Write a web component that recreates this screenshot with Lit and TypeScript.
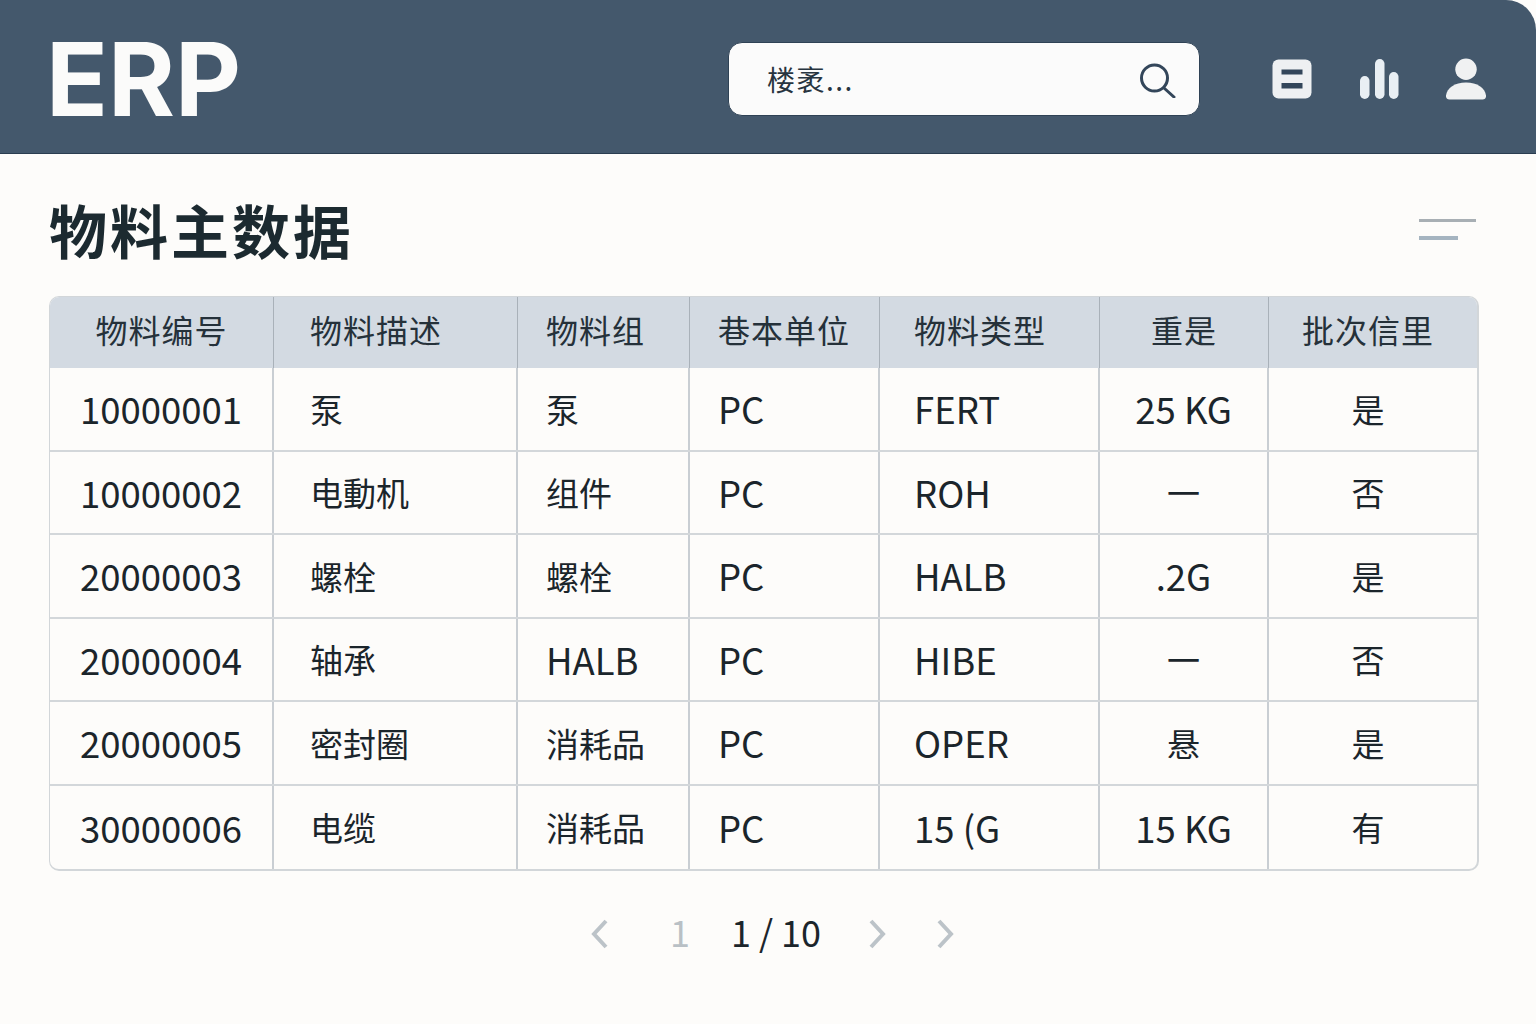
import { LitElement, html, css } from 'lit';
import { customElement } from 'lit/decorators.js';

const HEADERS = ['物料编号', '物料描述', '物料组', '巷本单位', '物料类型', '重是', '批次信里'];

const ROWS = [
  ['10000001', '泵', '泵', 'PC', 'FERT', '25 KG', '是'],
  ['10000002', '电動机', '组件', 'PC', 'ROH', '一', '否'],
  ['20000003', '螺栓', '螺栓', 'PC', 'HALB', '.2G', '是'],
  ['20000004', '轴承', 'HALB', 'PC', 'HIBE', '一', '否'],
  ['20000005', '密封圈', '消耗品', 'PC', 'OPER', '悬', '是'],
  ['30000006', '电缆', '消耗品', 'PC', '15 (G', '15 KG', '有'],
];

const hasCjk = (s: string) => /[\u4e00-\u9fff]/.test(s);

@customElement('app-root')
export class AppRoot extends LitElement {
  static styles = css`
    :host {
      display: block;
      width: 1536px;
      height: 1024px;
      overflow: hidden;
      background: #fdfcfa;
      font-family: 'Noto Sans CJK SC', 'Noto Sans', sans-serif;
      color: #1b252b;
    }

    .header {
      display: grid;
      grid-template-columns: 680px 472px 1fr;
      align-items: center;
      box-sizing: border-box;
      height: 154px;
      padding: 5px 0 0 48px;
      background: #44586c;
      border-bottom: 1px solid #2a3d50;
      border-top-right-radius: 30px;
    }

    .logo {
      margin-left: -2px;
      font-family: Inter, sans-serif;
      font-size: 102px;
      font-weight: 700;
      line-height: 1;
      color: #fbfbfa;
    }

    .search {
      display: flex;
      align-items: center;
      justify-content: space-between;
      box-sizing: border-box;
      height: 74px;
      padding: 0 23px 0 38px;
      background: #fbfbfb;
      border: 1px solid #2f4255;
      border-radius: 14px;
      font-size: 28px;
      letter-spacing: 1.5px;
      color: #27343f;
    }

    .header-icons {
      display: flex;
      align-items: center;
      gap: 47px;
      padding-left: 72px;
    }

    .header-icons svg {
      display: block;
    }

    .main {
      padding: 0 57px 0 49px;
    }

    .title-row {
      display: flex;
      align-items: center;
      justify-content: space-between;
      padding: 42px 3px 34px 0;
    }

    h1 {
      margin: 0;
      font-size: 58px;
      line-height: 66px;
      font-weight: 700;
      letter-spacing: 3px;
      color: #1c2a30;
    }

    .menu-lines {
      display: flex;
      flex-direction: column;
      gap: 14px;
    }

    .menu-lines span {
      display: block;
      width: 57px;
      height: 3px;
      background: #a8afb4;
    }

    .menu-lines span:last-child {
      width: 39px;
      height: 4px;
      background: #a5b4c0;
    }

    .table {
      display: grid;
      grid-template-rows: 71px repeat(6, 1fr);
      box-sizing: border-box;
      height: 575px;
      border: 1px solid #d2d6d9;
      border-bottom-width: 2px;
      border-right-width: 2px;
      border-radius: 10px;
      overflow: hidden;
    }

    .row {
      display: grid;
      grid-template-columns: 224px 244px 172px 190px 220px 169px 1fr;
      border-bottom: 2px solid #d3d7da;
    }

    .row:last-child {
      border-bottom: none;
    }

    .row.head {
      background: #d3dae2;
      border-bottom: none;
    }

    .cell {
      display: flex;
      align-items: center;
      box-sizing: border-box;
      border-right: 2px solid #c9ced3;
      font-size: 36.500px;
      white-space: nowrap;
    }

    .cell:last-child {
      border-right: none;
      padding-right: 10px;
    }

    .cell.cjk {
      font-size: 33px;
    }

    .head .cell {
      border-right: 1px solid #a9b1b9;
      padding-bottom: 7px;
      font-size: 32px;
      letter-spacing: 1px;
      color: #25313a;
    }

    .head .cell:last-child {
      border-right: none;
    }

    .cell:nth-child(1),
    .cell:nth-child(6),
    .cell:nth-child(7) {
      justify-content: center;
    }

    .cell:nth-child(2) {
      padding-left: 36px;
    }

    .cell:nth-child(3),
    .cell:nth-child(4) {
      padding-left: 28px;
    }

    .cell:nth-child(5) {
      padding-left: 34px;
    }

    .pager {
      display: flex;
      align-items: center;
      justify-content: center;
      height: 50px;
      margin-top: 38px;
      padding-left: 17px;
      font-size: 36px;
      line-height: 50px;
    }

    .pager svg {
      display: block;
    }

    .pager span {
      margin-bottom: 6px;
    }

    .pager .first {
      margin-left: 61px;
      margin-right: 41px;
      color: #b9c0c5;
    }

    .pager .current {
      margin-right: 47px;
    }

    .pager .last {
      margin-left: 50px;
    }
  `;

  render() {
    return html`
      <div class="header">
        <div class="logo">ERP</div>
        <div class="search">
          <span>楼袤...</span>
          <svg width="38" height="38" viewBox="0 0 38 38" fill="none" stroke="#33465a" stroke-width="3">
            <circle cx="16.5" cy="18" r="13"></circle>
            <path d="M26 28l10 9" stroke-linecap="round"></path>
          </svg>
        </div>
        <div class="header-icons">
          <svg width="40" height="40" viewBox="0 0 40 40">
            <rect x="0.5" y="0.5" width="39" height="39" rx="6" fill="#eef0f2"></rect>
            <rect x="9.500" y="10.500" width="21" height="5" fill="#33465a"></rect>
            <rect x="9.500" y="24" width="21" height="5.500" fill="#33465a"></rect>
          </svg>
          <svg width="40" height="40" viewBox="0 0 40 40" fill="#e9eff4">
            <rect x="1" y="17" width="9.500" height="23" rx="4.750"></rect>
            <rect x="16" y="0" width="9.500" height="40" rx="4.750"></rect>
            <rect x="30" y="13" width="9.500" height="27" rx="4.750"></rect>
          </svg>
          <svg width="40" height="44" viewBox="0 0 41 44" fill="#f0f1f2">
            <circle cx="20.5" cy="12" r="11"></circle>
            <path d="M0 39C1 31 9 25.500 20.500 25.500S40 31 41 39c.3 2.500-1 4-3.500 4h-34C1 43-.3 41.500 0 39z"></path>
          </svg>
        </div>
      </div>

      <div class="main">
        <div class="title-row">
          <h1>物料主数据</h1>
          <div class="menu-lines"><span></span><span></span></div>
        </div>

        <div class="table">
          <div class="row head">
            ${HEADERS.map((h) => html`<div class="cell">${h}</div>`)}
          </div>
          ${ROWS.map(
            (row) => html`
              <div class="row">
                ${row.map((v) => html`<div class="cell ${hasCjk(v) ? 'cjk' : ''}">${v}</div>`)}
              </div>
            `
          )}
        </div>

        <div class="pager">
          ${this.chevron('M15 3L3 16l12 13')}
          <span class="first">1</span>
          <span class="current">1 / 10</span>
          ${this.chevron('M3 3l12 13L3 29')}
          ${this.chevron('M3 3l12 13L3 29', 'last')}
        </div>
      </div>
    `;
  }

  private chevron(d: string, cls = '') {
    return html`
      <svg class=${cls} width="18" height="32" viewBox="0 0 18 32" fill="none" stroke="#bcc3c8" stroke-width="4">
        <path d=${d}></path>
      </svg>
    `;
  }
}
